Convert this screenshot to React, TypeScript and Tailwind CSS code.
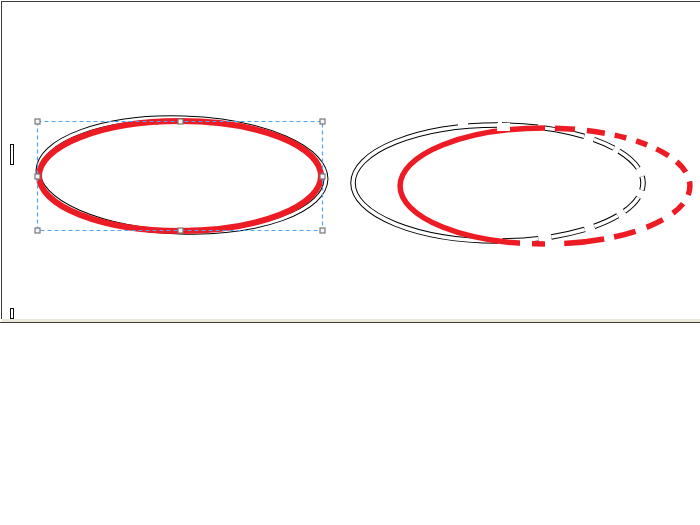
import React from 'react';

// ellipse helpers: page coordinates, half arcs so the dashed part starts where we want
const leftHalf = (cx: number, cy: number, rx: number, ry: number) =>
  `M ${cx} ${cy + ry} A ${rx} ${ry} 0 0 1 ${cx} ${cy - ry}`;
const rightHalf = (cx: number, cy: number, rx: number, ry: number) =>
  `M ${cx} ${cy - ry} A ${rx} ${ry} 0 0 1 ${cx} ${cy + ry}`;

function Handle({ x, y }: { x: number; y: number }) {
  return <rect x={x - 2.5} y={y - 2.5} width={5} height={5} fill="#f4f4f4" stroke="#777" strokeWidth={1.2} />;
}

const blackDash = '0 4 36 7 40 10 22 6 26 9 14 8 20 8 26 10 34 9';

function Canvas() {
  const handles = [
    [37.5, 121.5], [180.5, 121.5], [322.5, 121.5],
    [37.5, 176.5], [322.5, 176.5],
    [37.5, 230.5], [180.5, 230.5], [322.5, 230.5],
  ];

  return (
    <svg width={698} height={317} viewBox="2 2 698 317" className="block">
      {/* little markers on the left edge */}
      <rect x={10.5} y={144.5} width={3} height={20} fill="#fff" stroke="#111" strokeWidth={1} />
      <rect x={10.5} y={308.5} width={3} height={10} fill="#fff" stroke="#111" strokeWidth={1} />

      {/* left: outlined ellipse, slightly tilted */}
      <g transform="rotate(1.8 182 175)">
        <ellipse cx={182} cy={175} rx={144} ry={57} fill="none" stroke="#000" strokeWidth={5} />
        <ellipse cx={182} cy={175} rx={144} ry={57} fill="none" stroke="#fff" strokeWidth={3} />
      </g>
      {/* left: red ellipse */}
      <ellipse cx={180} cy={176} rx={141} ry={55} fill="none" stroke="#ed1c24" strokeWidth={6} />

      {/* selection box */}
      <rect x={37.5} y={121.5} width={285} height={109} fill="none" stroke="#4fa3f7" strokeWidth={1.2} strokeDasharray="4 3" />
      {handles.map(([x, y], i) => (
        <Handle key={i} x={x} y={y} />
      ))}

      {/* right: outlined ellipse, solid left half, dashed right half */}
      <g>
        <path d={leftHalf(498, 183, 145, 58)} fill="none" stroke="#000" strokeWidth={5.5} />
        <path d={leftHalf(498, 183, 145, 58)} fill="none" stroke="#fff" strokeWidth={3.5} />
        <path d={rightHalf(498, 183, 145, 58)} fill="none" stroke="#000" strokeWidth={5.5} strokeDasharray={blackDash} />
        <path d={rightHalf(498, 183, 145, 58)} fill="none" stroke="#fff" strokeWidth={3.5} strokeDasharray={blackDash} />
        <path d="M 458 124.5 L 468 124.5" stroke="#fff" strokeWidth={5} />
      </g>

      {/* right: red ellipse, solid left, dashed right */}
      <path d={leftHalf(545, 186, 145, 58)} fill="none" stroke="#ed1c24" strokeWidth={5.5} />
      <path d={rightHalf(545, 186, 145, 58)} fill="none" stroke="#ed1c24" strokeWidth={5.5} strokeDasharray="0 10 20 12 18 10 12 10 12 10 14 10 14 10 14 10 14 12 18 12 22 10 40 12" />
      <path d="M 497 127 L 510 127" stroke="#fff" strokeWidth={8} />
      <path d="M 520 244 L 532 244" stroke="#fff" strokeWidth={8} />
    </svg>
  );
}

export default function App() {
  return (
    <div className="w-[700px] h-[525px] bg-white overflow-hidden">
      <div className="pt-px pl-px">
        <div className="border-l border-t border-[#3c3c3c] h-[318px]">
          <Canvas />
        </div>
      </div>
      <div className="h-[3px] bg-[#ece9d8] ml-[2px]" />
      <div className="h-px bg-[#3c3c3c]" />
    </div>
  );
}
